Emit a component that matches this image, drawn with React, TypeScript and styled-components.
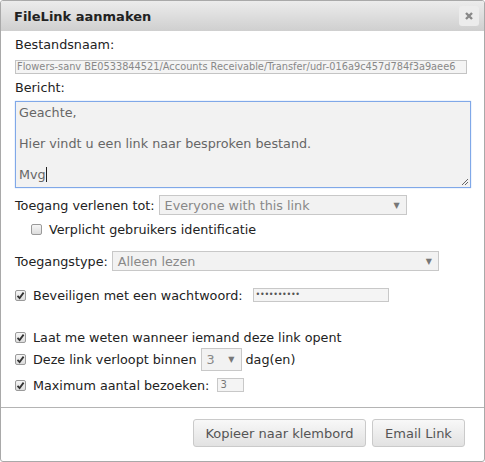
import React from 'react';
import styled, {createGlobalStyle} from 'styled-components';

const GlobalStyle = createGlobalStyle`
  html, body {
    margin: 0;
    padding: 0;
    background: #ffffff;
  }
  body {
    font-family: "DejaVu Sans", Verdana, sans-serif;
    font-size: 12.75px;
    color: #222;
  }
`

const Dialog = styled.div`
  width: 485px;
  height: 462px;
  box-sizing: border-box;
  border: 1px solid #a9a9a9;
  border-radius: 3px;
  display: flex;
  flex-direction: column;
  background: #fff;
  overflow: hidden;
`

const TitleBar = styled.div`
  height: 30px;
  flex-shrink: 0;
  display: flex;
  align-items: center;
  justify-content: space-between;
  padding: 0 5px 0 13px;
  background: linear-gradient(to bottom, #ececec, #cfcfcf);
`

const Title = styled.div`
  font-weight: bold;
  font-size: 13px;
  color: #222;
`

const CloseButton = styled.div`
  width: 20px;
  height: 20px;
  border-radius: 3px;
  background: #ececec;
  display: flex;
  align-items: center;
  justify-content: center;
`

const Body = styled.div`
  flex: 1;
  padding: 6px 14px 0 14px;
  display: flex;
  flex-direction: column;
`

const Label = styled.div`
  line-height: 16px;
`

const FileInput = styled.div`
  margin-top: 7px;
  margin-bottom: 6px;
  width: 452px;
  height: 14px;
  box-sizing: border-box;
  border: 1px solid #c4c4c4;
  background: #f4f4f4;
  font-size: 9.8px;
  line-height: 12px;
  color: #888;
  white-space: nowrap;
  overflow: hidden;
  padding-left: 1px;
`

const TextArea = styled.div`
  margin-top: 5px;
  width: 456px;
  height: 87px;
  box-sizing: border-box;
  border: 1px solid #80a8e8;
  box-shadow: 0 0 1px #9bbcf0;
  background: #f2f2f2;
  color: #666;
  padding: 3px 3px;
  line-height: 15.6px;
  position: relative;
`

const TextLine = styled.div`
  height: 15.6px;
`

const Caret = styled.span`
  display: inline-block;
  width: 1px;
  height: 15px;
  background: #222;
  vertical-align: -3px;
`

const Grip = styled.svg`
  position: absolute;
  right: 1px;
  bottom: 1px;
`

const Row = styled.div<{top: number; indent?: number; height?: number}>`
  display: flex;
  align-items: center;
  height: ${props => props.height || 16}px;
  margin-top: ${props => props.top}px;
  padding-left: ${props => props.indent || 0}px;
  gap: 4px;
`

const Select = styled.div<{width: number; height?: number}>`
  width: ${props => props.width}px;
  height: ${props => props.height || 20}px;
  box-sizing: border-box;
  border: 1px solid #c8c8c8;
  background: #f2f2f2;
  color: #888;
  display: flex;
  align-items: center;
  justify-content: space-between;
  padding: 0 6px 0 5px;
`

const Arrow = styled.span`
  font-size: 8px;
  color: #777;
`

const SmallInput = styled.div<{width: number; left: number}>`
  width: ${props => props.width}px;
  height: 14px;
  margin-left: ${props => props.left}px;
  box-sizing: border-box;
  border: 1px solid #c8c8c8;
  background: #f4f4f4;
  font-size: 10px;
  line-height: 12px;
  color: #777;
  padding-left: 2px;
  overflow: hidden;
`

const Dots = styled.span`
  font-size: 8px;
  letter-spacing: -0.3px;
  color: #555;
  vertical-align: 1px;
`

const Box = styled.span`
  width: 11px;
  height: 11px;
  box-sizing: border-box;
  border: 1px solid #9a9a9a;
  border-radius: 2px;
  background: linear-gradient(to bottom, #f6f6f6, #dcdcdc);
  display: inline-flex;
  align-items: center;
  justify-content: center;
  flex-shrink: 0;
  margin-right: 3px;
`

const Separator = styled.div`
  height: 1px;
  background: #b4b4b4;
  flex-shrink: 0;
`

const Footer = styled.div`
  height: 53px;
  box-sizing: border-box;
  flex-shrink: 0;
  display: flex;
  justify-content: flex-end;
  align-items: flex-start;
  padding: 11px 19px 0 0;
  gap: 6px;
`

const Button = styled.div<{width: number}>`
  width: ${props => props.width}px;
  height: 28px;
  box-sizing: border-box;
  border: 1px solid #cacaca;
  border-radius: 3px;
  background: linear-gradient(to bottom, #f8f8f8, #e2e2e2);
  color: #555;
  font-size: 13px;
  display: flex;
  align-items: center;
  justify-content: center;
`

const Checkbox = ({checked}: {checked: boolean}) => (
    <Box>
        {checked && (
            <svg width="9" height="9" viewBox="0 0 9 9">
                <path d="M1.5 4.8 L3.6 7 L7.6 1.6" stroke="#333" strokeWidth="1.8" fill="none"/>
            </svg>
        )}
    </Box>
)

export default function App() {
    return (
        <>
            <GlobalStyle/>
            <Dialog>
                <TitleBar>
                    <Title>FileLink aanmaken</Title>
                    <CloseButton>
                        <svg width="10" height="10" viewBox="0 0 10 10">
                            <path d="M2 2 L8 8 M8 2 L2 8" stroke="#888" strokeWidth="2.4"/>
                        </svg>
                    </CloseButton>
                </TitleBar>
                <Body>
                    <Label>Bestandsnaam:</Label>
                    <FileInput>Flowers-sanv BE0533844521/Accounts Receivable/Transfer/udr-016a9c457d784f3a9aee6</FileInput>
                    <Label>Bericht:</Label>
                    <TextArea>
                        <TextLine>Geachte,</TextLine>
                        <TextLine/>
                        <TextLine>Hier vindt u een link naar besproken bestand.</TextLine>
                        <TextLine/>
                        <TextLine>Mvg<Caret/></TextLine>
                        <Grip width="9" height="9" viewBox="0 0 9 9">
                            <path d="M8 2 L2 8 M8 5 L5 8" stroke="#666" strokeWidth="1"/>
                        </Grip>
                    </TextArea>
                    <Row top={7} height={20}>
                        <span>Toegang verlenen tot:</span>
                        <Select width={248}>
                            <span>Everyone with this link</span>
                            <Arrow>▼</Arrow>
                        </Select>
                    </Row>
                    <Row top={6} indent={16}>
                        <Checkbox checked={false}/>
                        <span>Verplicht gebruikers identificatie</span>
                    </Row>
                    <Row top={14} height={20}>
                        <span>Toegangstype:</span>
                        <Select width={327}>
                            <span>Alleen lezen</span>
                            <Arrow>▼</Arrow>
                        </Select>
                    </Row>
                    <Row top={16}>
                        <Checkbox checked={true}/>
                        <span>Beveiligen met een wachtwoord:</span>
                        <SmallInput width={136} left={6}>
                            <Dots>••••••••••</Dots>
                        </SmallInput>
                    </Row>
                    <Row top={26}>
                        <Checkbox checked={true}/>
                        <span>Laat me weten wanneer iemand deze link opent</span>
                    </Row>
                    <Row top={3} height={23}>
                        <Checkbox checked={true}/>
                        <span>Deze link verloopt binnen</span>
                        <Select width={41} height={23}>
                            <span>3</span>
                            <Arrow>▼</Arrow>
                        </Select>
                        <span>dag(en)</span>
                    </Row>
                    <Row top={6}>
                        <Checkbox checked={true}/>
                        <span>Maximum aantal bezoeken:</span>
                        <SmallInput width={27} left={4}>3</SmallInput>
                    </Row>
                </Body>
                <Separator/>
                <Footer>
                    <Button width={173}>Kopieer naar klembord</Button>
                    <Button width={93}>Email Link</Button>
                </Footer>
            </Dialog>
        </>
    );
}
